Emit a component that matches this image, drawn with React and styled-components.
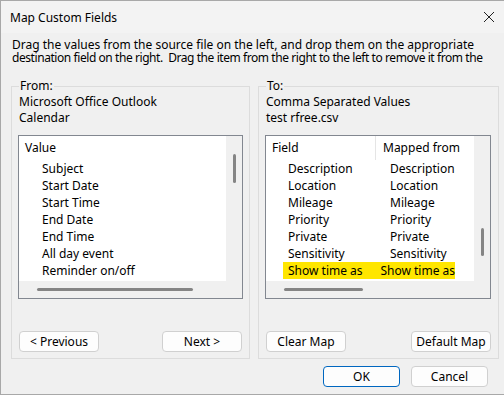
import React from "react";
import styled, { createGlobalStyle } from "styled-components";

const Global = createGlobalStyle`
  html, body { margin: 0; padding: 0; background: #f0f0f0; }
  * { box-sizing: border-box; }
`;

const Window = styled.div`
  width: 505px;
  height: 395px;
  background: #f0f0f0;
  border: 1px solid #a8a8a8;
  border-right: none;
  font-family: "Segoe UI", "Noto Sans", sans-serif;
  font-size: 12px;
  color: #000;
  display: flex;
  flex-direction: column;
`;

const TitleBar = styled.div`
  height: 32px;
  flex: none;
  background: #f3f3f3;
  display: flex;
  align-items: center;
  justify-content: space-between;
  padding: 0 9px 0 9px;
  font-size: 12px;
`;

const Close = styled.div`
  width: 12px;
  height: 12px;
  margin-right: 1px;
  display: flex;
`;

const Intro = styled.div`
  margin: 5px 0 0 11px;
`;

const IntroLine = styled.div`
  line-height: 13px;
  white-space: nowrap;
  letter-spacing: ${(p) => p.$spacing || 0}px;
`;

const Groups = styled.div`
  display: flex;
  gap: 8px;
  padding: 0 6px 0 10px;
  margin-top: 14px;
`;

const Group = styled.fieldset`
  margin: 0;
  flex: ${(p) => (p.$w ? `0 0 ${p.$w}px` : "1")};
  height: 281px;
  border: 1px solid #dcdcdc;
  padding: 0 ${(p) => p.$right ?? 6}px 6px 6px;
  display: flex;
  flex-direction: column;
  min-width: 0;
`;

const Legend = styled.legend`
  margin-left: 1px;
  padding: 0 1px;
  line-height: 16px;
`;

const Line = styled.div`
  line-height: 16px;
  padding-left: 1px;
`;

const ListBox = styled.div`
  margin-top: 9px;
  height: 164px;
  border: 1px solid #828790;
  display: grid;
  grid-template-columns: 1fr 16px;
  grid-template-rows: 1fr 17px;
`;

const ListArea = styled.div`
  background: #fff;
  overflow: hidden;
`;

const VTrack = styled.div`
  background: #f0f0f0;
  padding-top: ${(p) => p.$top}px;
  display: flex;
  justify-content: center;
`;

const VThumb = styled.div`
  width: 3px;
  height: ${(p) => p.$len}px;
  border-radius: 2px;
  background: #858585;
`;

const HTrack = styled.div`
  grid-column: 1 / 3;
  background: #f0f0f0;
  display: flex;
  align-items: center;
  padding-left: ${(p) => p.$left}px;
`;

const HThumb = styled.div`
  height: 3px;
  width: ${(p) => p.$len}px;
  border-radius: 2px;
  background: #858585;
`;

const Header = styled.div`
  height: 24px;
  display: flex;
  align-items: center;
`;

const HeadCell = styled.div`
  width: ${(p) => (p.$w ? `${p.$w}px` : "auto")};
  padding-left: ${(p) => p.$pad ?? 6}px;
  line-height: 24px;
  border-right: ${(p) => (p.$divider ? "1px solid #e5e5e5" : "none")};
`;

const Item = styled.div`
  height: 17px;
  line-height: 17px;
  padding-left: 23px;
`;

const MapRow = styled.div`
  height: 17px;
  line-height: 17px;
  margin-left: 17px;
  width: 172px;
  display: flex;
  background: ${(p) => (p.$hi ? "#ffe600" : "transparent")};
`;

const MapCell = styled.div`
  width: ${(p) => (p.$w ? `${p.$w}px` : "auto")};
  padding-left: ${(p) => p.$pad ?? 6}px;
  white-space: nowrap;
`;

const ButtonRow = styled.div`
  margin-top: auto;
  display: flex;
  justify-content: space-between;
  padding: 0 ${(p) => p.$right ?? 0}px 0 1px;
`;

const Button = styled.button`
  width: ${(p) => p.$w || 80}px;
  height: 21px;
  background: #fdfdfd;
  border: 1px solid ${(p) => (p.$primary ? "#0067c0" : "#d0d0d0")};
  border-radius: 4px;
  font-family: inherit;
  font-size: 12px;
  color: #000;
  padding: 0;
`;

const Footer = styled.div`
  display: flex;
  justify-content: flex-end;
  gap: 11px;
  padding-right: 17px;
  margin-top: 7px;
`;

const leftItems = [
  "Subject",
  "Start Date",
  "Start Time",
  "End Date",
  "End Time",
  "All day event",
  "Reminder on/off",
];

const rightItems = [
  "Description",
  "Location",
  "Mileage",
  "Priority",
  "Private",
  "Sensitivity",
  "Show time as",
];

export default function App() {
  return (
    <Window>
      <Global />
      <TitleBar>
        <span>Map Custom Fields</span>
        <Close>
          <svg width="12" height="12" viewBox="0 0 12 12">
            <path d="M1 1L11 11M11 1L1 11" stroke="#222" strokeWidth="1" />
          </svg>
        </Close>
      </TitleBar>
      <Intro>
        <IntroLine>
          Drag the values from the source file on the left, and drop them on the appropriate
        </IntroLine>
        <IntroLine $spacing={-0.43}>
          destination field on the right.&nbsp; Drag the item from the right to the left to remove it from the
        </IntroLine>
      </Intro>
      <Groups>
        <Group $w={239}>
          <Legend>From:</Legend>
          <Line>Microsoft Office Outlook</Line>
          <Line>Calendar</Line>
          <ListBox>
            <ListArea>
              <Header>
                <HeadCell>Value</HeadCell>
              </Header>
              {leftItems.map((t) => (
                <Item key={t}>{t}</Item>
              ))}
            </ListArea>
            <VTrack $top={18}>
              <VThumb $len={29} />
            </VTrack>
            <HTrack $left={18}>
              <HThumb $len={156} />
            </HTrack>
          </ListBox>
          <ButtonRow $right={1}>
            <Button>&lt; Previous</Button>
            <Button>Next &gt;</Button>
          </ButtonRow>
        </Group>
        <Group $right={7}>
          <Legend>To:</Legend>
          <Line>Comma Separated Values</Line>
          <Line>test rfree.csv</Line>
          <ListBox>
            <ListArea>
              <Header>
                <HeadCell $w={110} $divider>
                  Field
                </HeadCell>
                <HeadCell $pad={7}>Mapped from</HeadCell>
              </Header>
              {rightItems.map((t, i) => (
                <MapRow key={t} $hi={i === rightItems.length - 1}>
                  <MapCell $w={100} $pad={5}>{t}</MapCell>
                  <MapCell $pad={7}>{t}</MapCell>
                </MapRow>
              ))}
            </ListArea>
            <VTrack $top={92}>
              <VThumb $len={28} />
            </VTrack>
            <HTrack $left={18}>
              <HThumb $len={79} />
            </HTrack>
          </ListBox>
          <ButtonRow>
            <Button>Clear Map</Button>
            <Button>Default Map</Button>
          </ButtonRow>
        </Group>
      </Groups>
      <Footer>
        <Button $w={77} $primary>
          OK
        </Button>
        <Button $w={77}>Cancel</Button>
      </Footer>
    </Window>
  );
}
